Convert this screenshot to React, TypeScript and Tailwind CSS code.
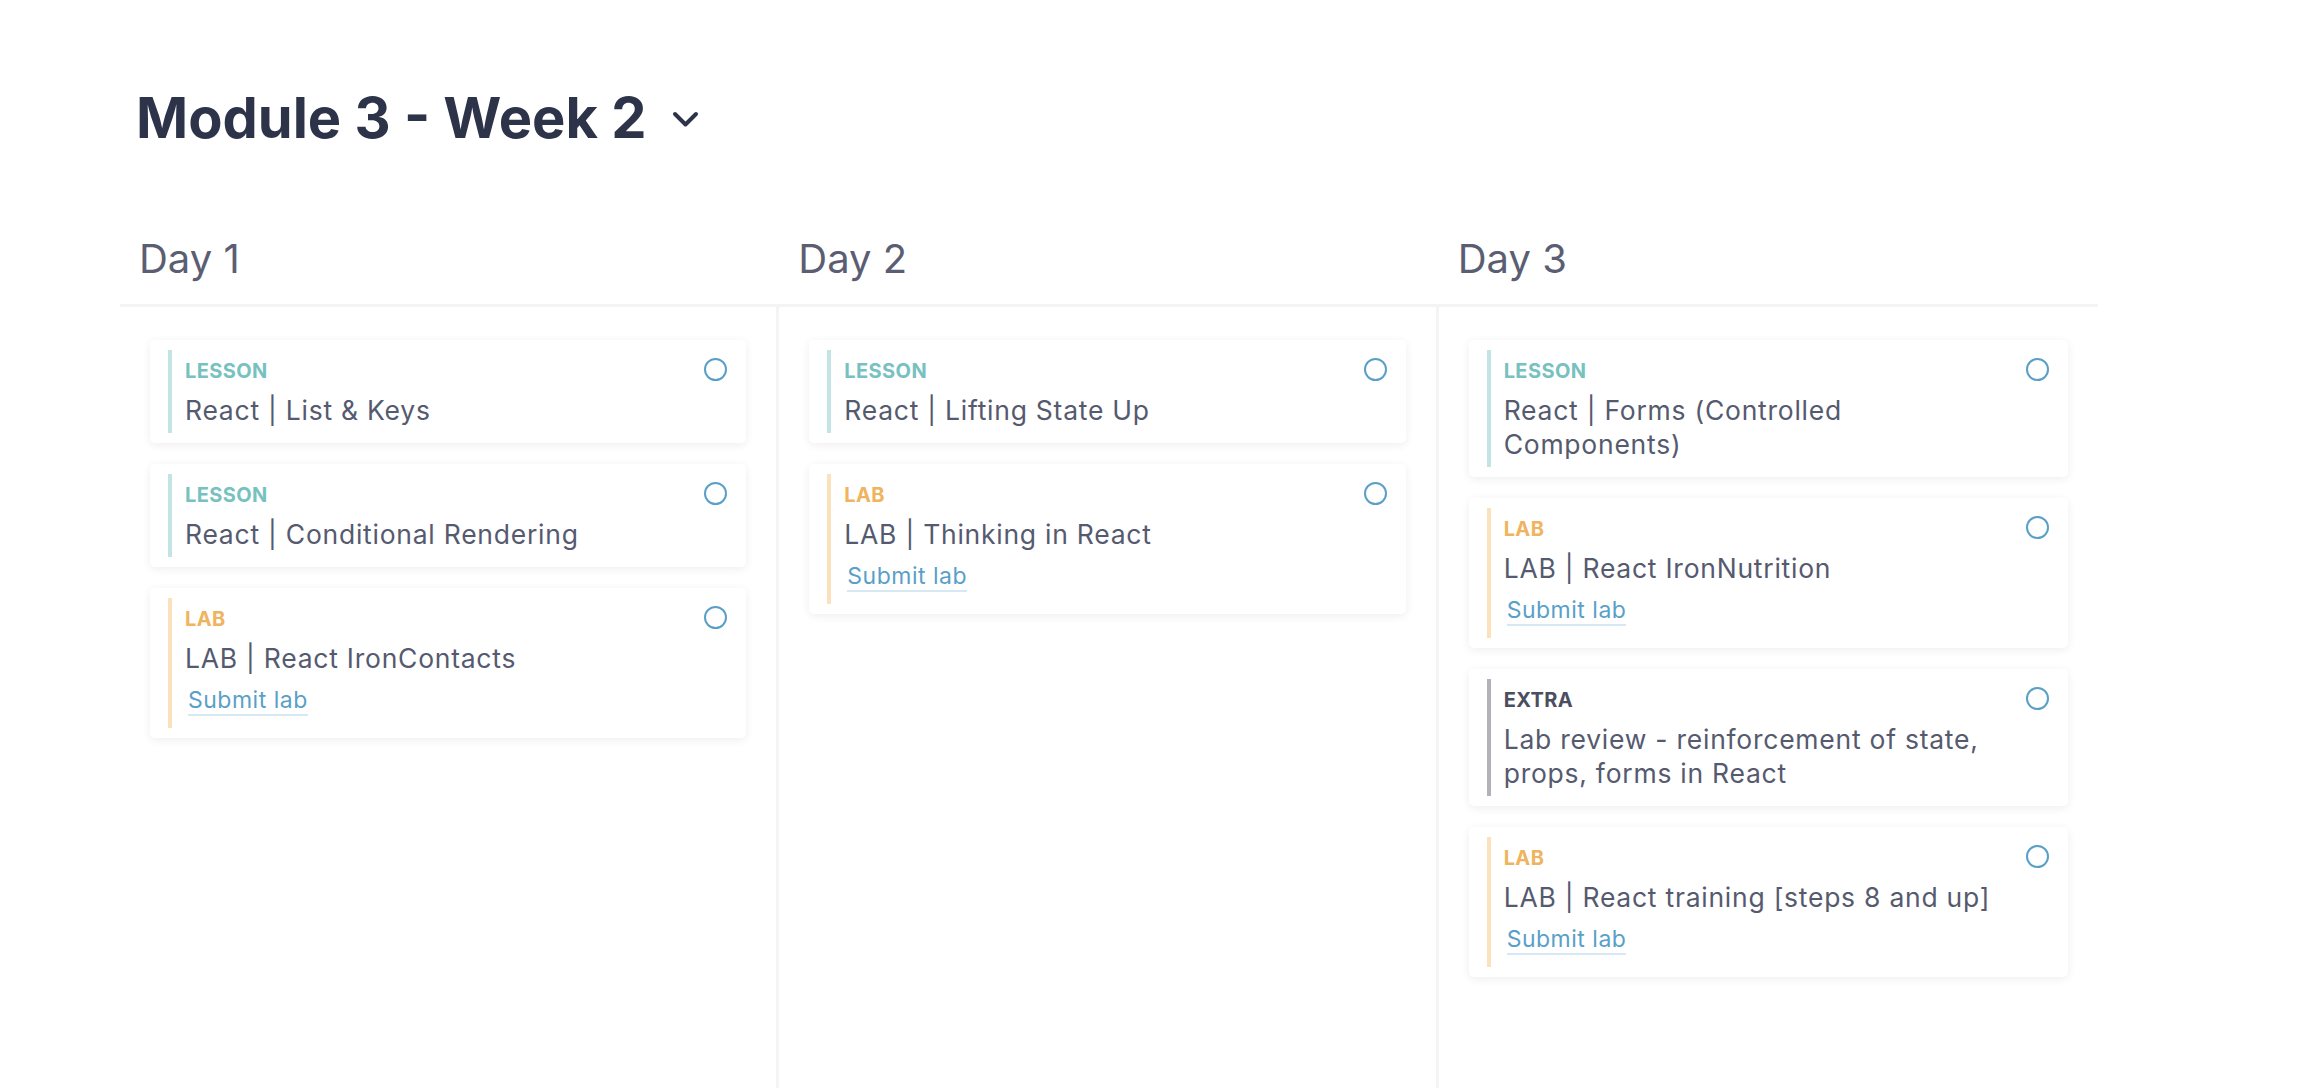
import React from "react";

type Kind = "lesson" | "lab" | "extra";
type Item = { kind: Kind; title: string; submit?: boolean };

const days: { name: string; items: Item[] }[] = [
  {
    name: "Day 1",
    items: [
      { kind: "lesson", title: "React | List & Keys" },
      { kind: "lesson", title: "React | Conditional Rendering" },
      { kind: "lab", title: "LAB | React IronContacts", submit: true },
    ],
  },
  {
    name: "Day 2",
    items: [
      { kind: "lesson", title: "React | Lifting State Up" },
      { kind: "lab", title: "LAB | Thinking in React", submit: true },
    ],
  },
  {
    name: "Day 3",
    items: [
      { kind: "lesson", title: "React | Forms (Controlled Components)" },
      { kind: "lab", title: "LAB | React IronNutrition", submit: true },
      { kind: "extra", title: "Lab review - reinforcement of state, props, forms in React" },
      { kind: "lab", title: "LAB | React training [steps 8 and up]", submit: true },
    ],
  },
];

const barClass: Record<Kind, string> = {
  lesson: "border-[#c3e4e4]",
  lab: "border-[#fbe2bc]",
  extra: "border-[#b2b3b8]",
};
const labelClass: Record<Kind, string> = {
  lesson: "text-[#77c1c0]",
  lab: "text-[#f0b35e]",
  extra: "text-[#4a4e5f]",
};
const labelText: Record<Kind, string> = {
  lesson: "LESSON",
  lab: "LAB",
  extra: "EXTRA",
};

function Card({ item }: { item: Item }) {
  return (
    <div className="flex rounded-[5px] bg-white pl-[18px] pr-[19px] py-[10px] shadow-[0_2px_10px_rgba(0,0,0,0.07)]">
      <div className={`flex-1 border-l-4 pl-[13px] pt-[6px] ${item.submit ? "pb-[12px]" : "pb-[6px]"} ${barClass[item.kind]}`}>
        <div className={`text-[20px] leading-[30px] font-bold tracking-[0.4px] ${labelClass[item.kind]}`}>{labelText[item.kind]}</div>
        <div className="mt-[7px] text-[26.5px] leading-[34px] tracking-[0.75px] text-[#555a6f] pr-[20px]">{item.title}</div>
        {item.submit && (
          <div className="mt-[12px] ml-[3px]">
            <span className="inline-block border-b-2 border-[#d5e8f3] text-[23px] leading-[27px] tracking-[0.5px] text-[#5a9fc8]">Submit lab</span>
          </div>
        )}
      </div>
      <div className="mt-[8px] h-[23px] w-[23px] shrink-0 rounded-full border-2 border-[#5a9fc8]" />
    </div>
  );
}

export default function App() {
  return (
    <div className="flex h-[1088px] w-full flex-col bg-white pt-[90px] pl-[120px] pr-[206px] font-['Inter',sans-serif]">
      <div className="ml-[16px] flex items-center">
        <h1 className="text-[56px] leading-[56px] font-bold text-[#2d344a]">Module 3 - Week 2</h1>
        <svg className="ml-[26px] mt-[2px]" width="27" height="17" viewBox="0 0 27 17" fill="none">
          <polyline points="3,3 13.5,13.5 24,3" stroke="#2d344a" strokeWidth="4" strokeLinecap="round" strokeLinejoin="round" />
        </svg>
      </div>
      <div className="mt-[93px] grid grid-cols-3 border-b-[3px] border-[#f4f4f5]">
        {days.map((d) => (
          <div key={d.name} className="pl-[19px] pb-[25px] text-[40px] leading-[40px] text-[#5b5e72]">
            {d.name}
          </div>
        ))}
      </div>
      <div className="grid flex-1 grid-cols-3">
        {days.map((d, i) => (
          <div
            key={d.name}
            className={`flex flex-col gap-[21px] px-[30px] pt-[33px] ${i < 2 ? "border-r-[3px] border-[#f4f4f5]" : ""}`}
          >
            {d.items.map((it, j) => (
              <Card key={j} item={it} />
            ))}
          </div>
        ))}
      </div>
    </div>
  );
}
